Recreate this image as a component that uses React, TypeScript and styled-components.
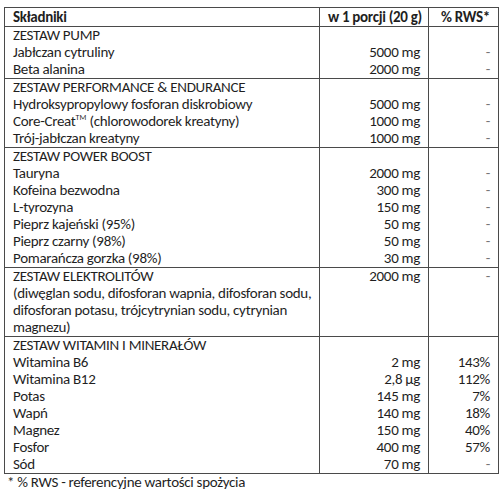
import styled, { createGlobalStyle } from "styled-components";

const GlobalStyle = createGlobalStyle`
  html, body {
    margin: 0;
    padding: 0;
    background: #ffffff;
  }
  body {
    font-family: Carlito, Calibri, Lato, "Liberation Sans", sans-serif;
    color: #1f1f1f;
  }
`;

const Page = styled.div`
  padding: 7px 0 0 4px;
  width: 500px;
  box-sizing: border-box;
`;

const Table = styled.table`
  border-collapse: collapse;
  table-layout: fixed;
  width: 494px;
  font-size: 15px;
  letter-spacing: -0.3px;
  line-height: 17px;
`;

const HeadCell = styled.th<{ $align?: "left" | "right" }>`
  text-align: ${(p) => p.$align ?? "left"};
  font-weight: 700;
  height: 19px;
  padding: 0 8px;
  border: 1px solid #4a4a4a;
  white-space: nowrap;
  box-sizing: border-box;
`;

const Group = styled.tbody`
  border-top: 1px solid #4a4a4a;
  border-bottom: 1px solid #4a4a4a;
`;

const Cell = styled.td<{ $align?: "left" | "right"; $muted?: boolean }>`
  text-align: ${(p) => p.$align ?? "left"};
  color: ${(p) => (p.$muted ? "#777" : "inherit")};
  padding: 0 8px;
  height: 17px;
  border-left: 1px solid #4a4a4a;
  border-right: 1px solid #4a4a4a;
  white-space: nowrap;
  vertical-align: top;
`;

const Sup = styled.sup`
  font-size: 8px;
  letter-spacing: 0;
  line-height: 0;
  vertical-align: 6px;
`;

const Note = styled.div`
  padding: 0 0 0 3px;
  font-size: 15px;
  letter-spacing: -0.3px;
  line-height: 16px;
`;

interface IItem {
  name: React.ReactNode;
  amount?: string;
  rws?: string;
}

interface IGroup {
  title: string;
  amount?: string;
  rws?: string;
  items: IItem[];
}

const groups: IGroup[] = [
  {
    title: "ZESTAW PUMP",
    items: [
      { name: "Jabłczan cytruliny", amount: "5000 mg", rws: "-" },
      { name: "Beta alanina", amount: "2000 mg", rws: "-" },
    ],
  },
  {
    title: "ZESTAW PERFORMANCE & ENDURANCE",
    items: [
      { name: "Hydroksypropylowy fosforan diskrobiowy", amount: "5000 mg", rws: "-" },
      {
        name: (
          <>
            Core-Creat<Sup>TM</Sup> (chlorowodorek kreatyny)
          </>
        ),
        amount: "1000 mg",
        rws: "-",
      },
      { name: "Trój-jabłczan kreatyny", amount: "1000 mg", rws: "-" },
    ],
  },
  {
    title: "ZESTAW POWER BOOST",
    items: [
      { name: "Tauryna", amount: "2000 mg", rws: "-" },
      { name: "Kofeina bezwodna", amount: "300 mg", rws: "-" },
      { name: "L-tyrozyna", amount: "150 mg", rws: "-" },
      { name: "Pieprz kajeński (95%)", amount: "50 mg", rws: "-" },
      { name: "Pieprz czarny (98%)", amount: "50 mg", rws: "-" },
      { name: "Pomarańcza gorzka (98%)", amount: "30 mg", rws: "-" },
    ],
  },
  {
    title: "ZESTAW ELEKTROLITÓW",
    amount: "2000 mg",
    rws: "-",
    items: [
      { name: "(diwęglan sodu, difosforan wapnia, difosforan sodu," },
      { name: "difosforan potasu, trójcytrynian sodu, cytrynian" },
      { name: "magnezu)" },
    ],
  },
  {
    title: "ZESTAW WITAMIN I MINERAŁÓW",
    items: [
      { name: "Witamina B6", amount: "2 mg", rws: "143%" },
      { name: "Witamina B12", amount: "2,8 µg", rws: "112%" },
      { name: "Potas", amount: "145 mg", rws: "7%" },
      { name: "Wapń", amount: "140 mg", rws: "18%" },
      { name: "Magnez", amount: "150 mg", rws: "40%" },
      { name: "Fosfor", amount: "400 mg", rws: "57%" },
      { name: "Sód", amount: "70 mg", rws: "-" },
    ],
  },
];

export default function App() {
  return (
    <Page>
      <GlobalStyle />
      <Table>
        <colgroup>
          <col style={{ width: 315 }} />
          <col style={{ width: 109 }} />
          <col style={{ width: 70 }} />
        </colgroup>
        <thead>
          <tr>
            <HeadCell>Składniki</HeadCell>
            <HeadCell $align="right">w 1 porcji (20 g)</HeadCell>
            <HeadCell $align="right">% RWS*</HeadCell>
          </tr>
        </thead>
        {groups.map((group) => (
          <Group key={group.title}>
            <tr>
              <Cell>{group.title}</Cell>
              <Cell $align="right">{group.amount}</Cell>
              <Cell $align="right" $muted={group.rws === "-"}>
                {group.rws}
              </Cell>
            </tr>
            {group.items.map((item, i) => (
              <tr key={i}>
                <Cell>{item.name}</Cell>
                <Cell $align="right">{item.amount}</Cell>
                <Cell $align="right" $muted={item.rws === "-"}>
                  {item.rws}
                </Cell>
              </tr>
            ))}
          </Group>
        ))}
      </Table>
      <Note>* % RWS - referencyjne wartości spożycia</Note>
    </Page>
  );
}
